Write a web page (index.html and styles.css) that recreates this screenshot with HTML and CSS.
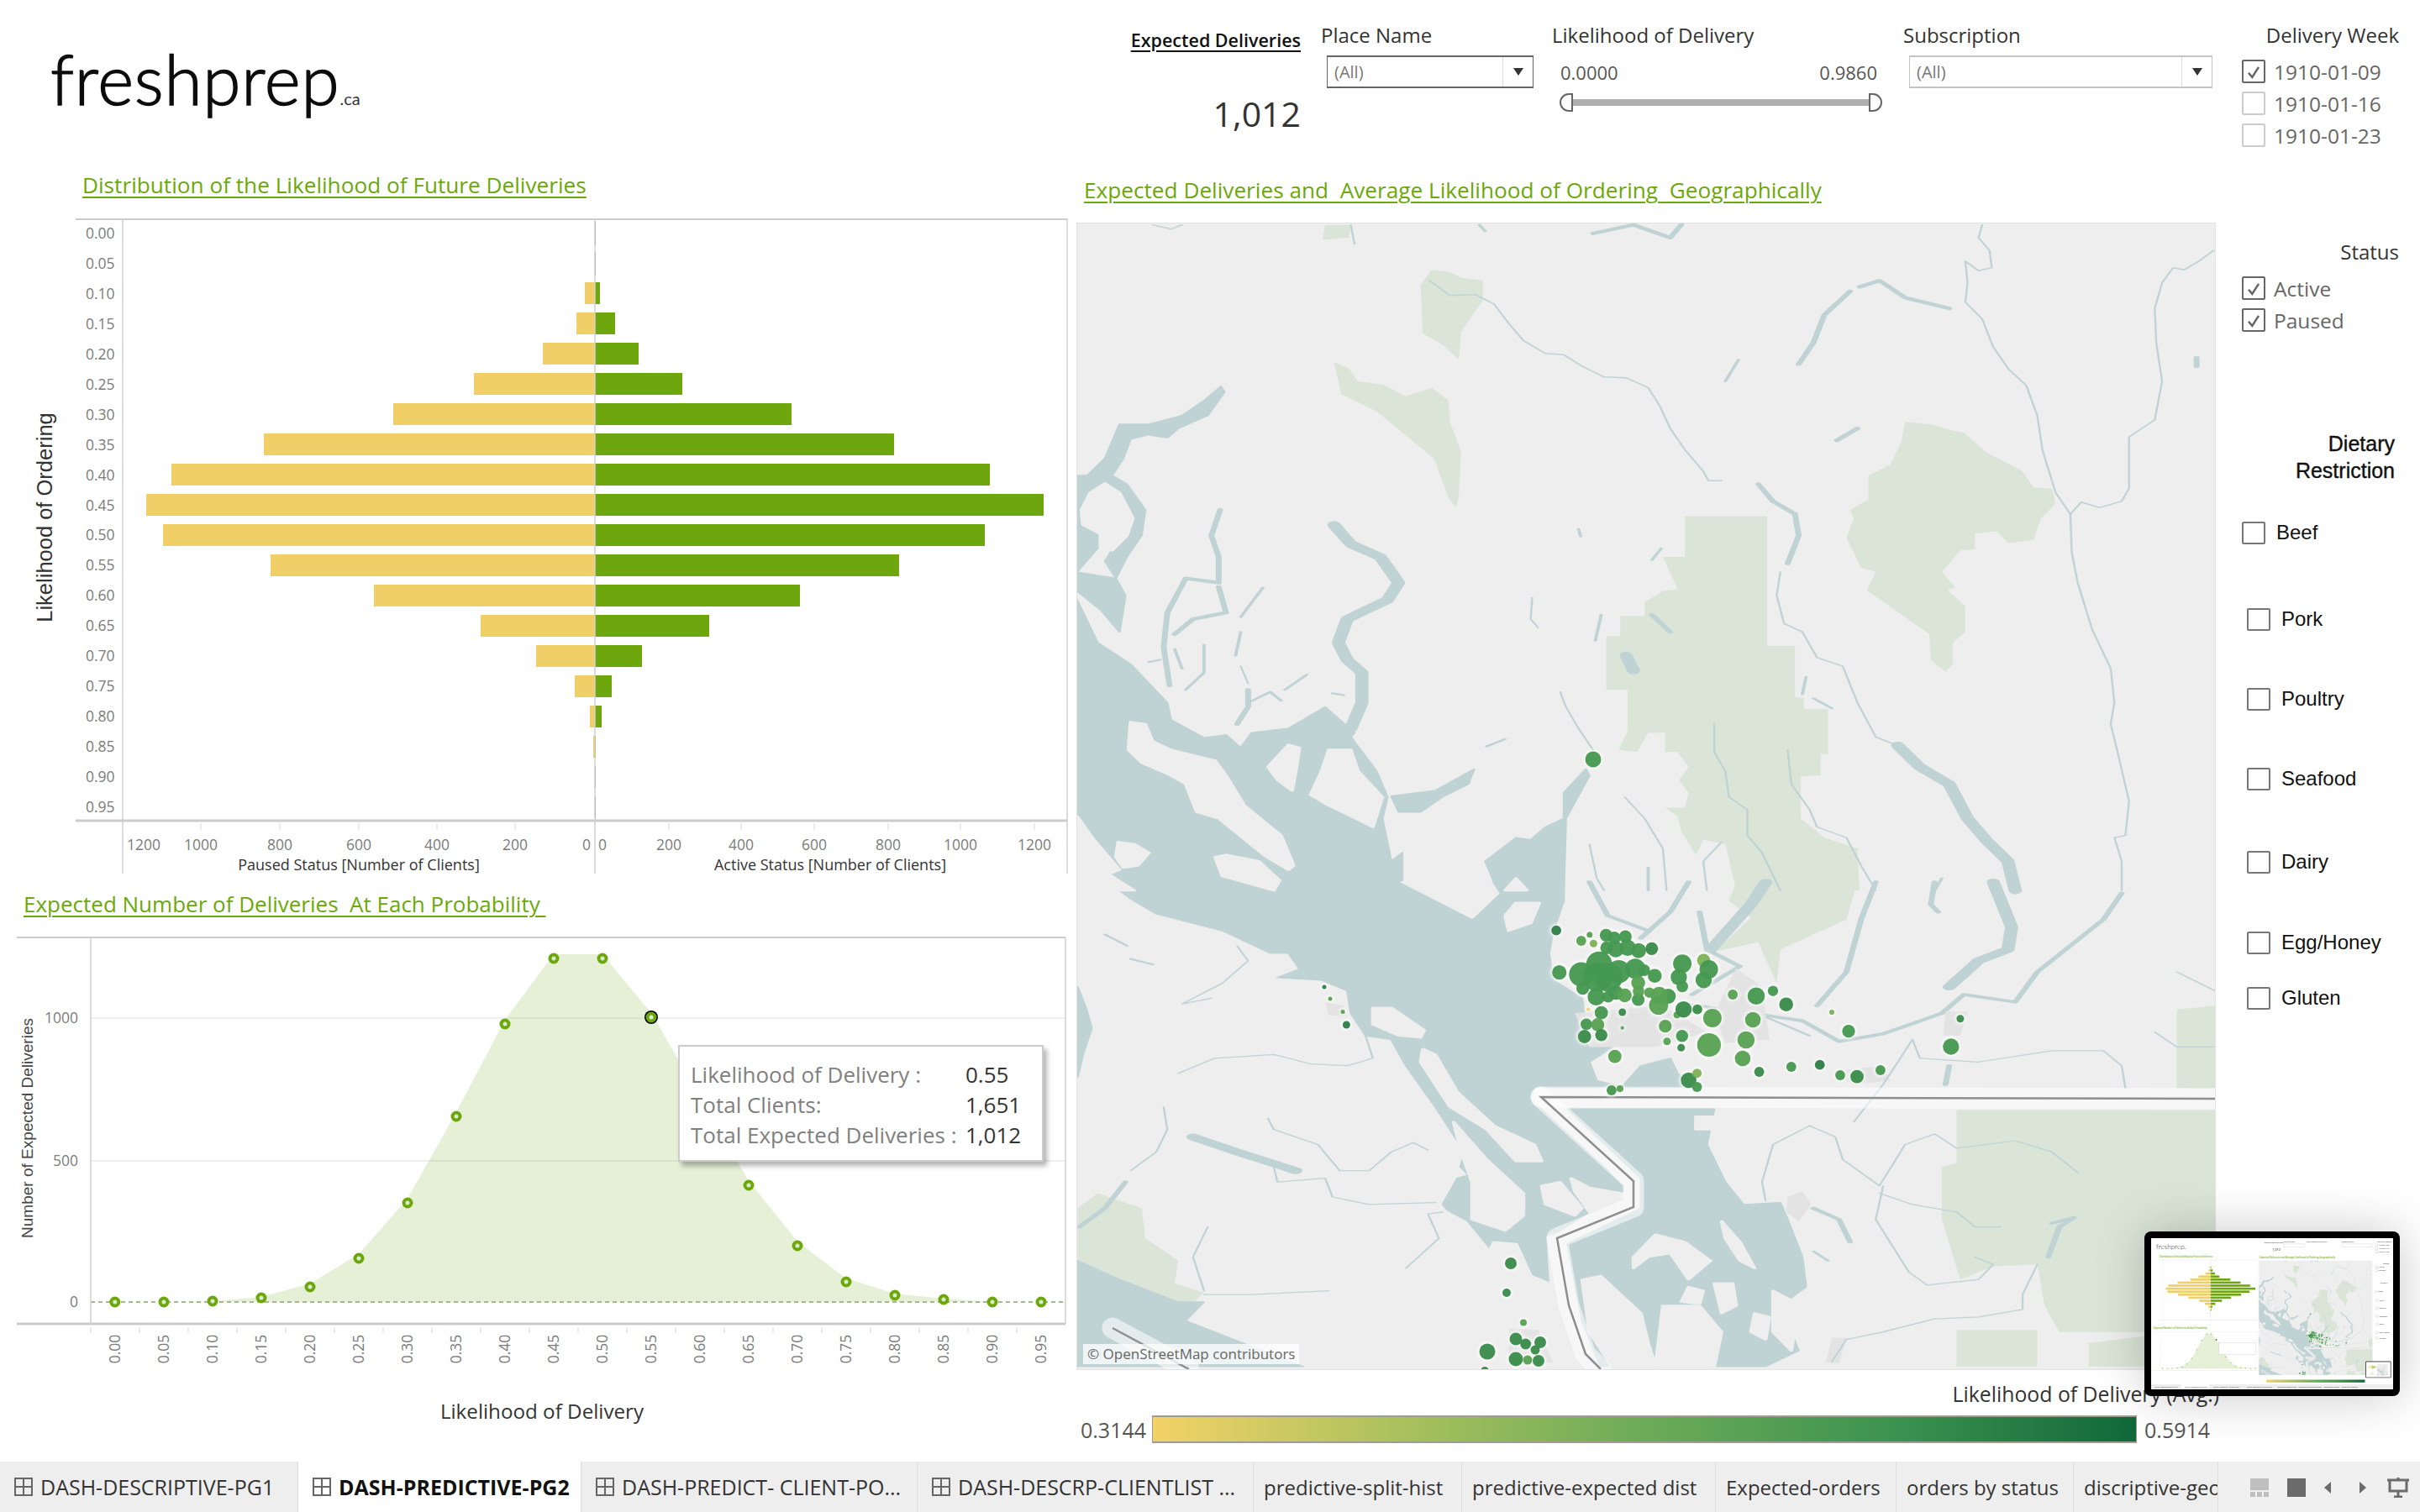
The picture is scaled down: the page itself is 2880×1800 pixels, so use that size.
FILE: index.html
```html
<!DOCTYPE html>
<html><head>
  <meta charset="utf-8">
  <title>freshprep - DASH-PREDICTIVE-PG2</title>
<link rel="stylesheet" href="styles.css">
</head>
<body>
<svg class="defs">
 <symbol id="icongrid" viewBox="0 0 22 22"><path d="M1 1h20v20h-20zM11 1v20M1 11h20"/></symbol>
 <symbol id="iconcheck" viewBox="0 0 28 28"><path d="M7 16l5 6 9-14"/></symbol>
 <linearGradient id="legendgrad"><stop offset="0" stop-color="#f3d267"/><stop offset=".25" stop-color="#aac15d"/><stop offset=".5" stop-color="#6cab58"/><stop offset=".75" stop-color="#3d9350"/><stop offset="1" stop-color="#10683a"/></linearGradient>
 <clipPath id="mapclip"><rect x="1282" y="266" width="1354" height="1364"/></clipPath>
</svg>

<div id="dash">

<div id="leftcol">
 <div class="logo">freshprep<span class="logoca">.ca</span></div>

 <div class="charttitle title1"><span>Distribution of the Likelihood of Future Deliveries</span></div>
 <svg class="chart1" viewBox="0 256 1282 800">
  <g id="bars">
   <g class="yellow">
    <rect x="696" y="336" width="12" height="26"/>
    <rect x="686" y="372" width="22" height="26"/>
    <rect x="646" y="408" width="62" height="26"/>
    <rect x="564" y="444" width="144" height="26"/>
    <rect x="468" y="480" width="240" height="26"/>
    <rect x="314" y="516" width="394" height="26"/>
    <rect x="204" y="552" width="504" height="26"/>
    <rect x="174" y="588" width="534" height="26"/>
    <rect x="194" y="624" width="514" height="26"/>
    <rect x="322" y="660" width="386" height="26"/>
    <rect x="445" y="696" width="263" height="26"/>
    <rect x="572" y="732" width="136" height="26"/>
    <rect x="638" y="768" width="70" height="26"/>
    <rect x="684" y="804" width="24" height="26"/>
    <rect x="702" y="840" width="6" height="26"/>
    <rect x="706" y="876" width="2" height="26"/>
   </g>
   <g class="green">
    <rect x="708" y="336" width="6" height="26"/>
    <rect x="708" y="372" width="24" height="26"/>
    <rect x="708" y="408" width="52" height="26"/>
    <rect x="708" y="444" width="104" height="26"/>
    <rect x="708" y="480" width="234" height="26"/>
    <rect x="708" y="516" width="356" height="26"/>
    <rect x="708" y="552" width="470" height="26"/>
    <rect x="708" y="588" width="534" height="26"/>
    <rect x="708" y="624" width="464" height="26"/>
    <rect x="708" y="660" width="362" height="26"/>
    <rect x="708" y="696" width="244" height="26"/>
    <rect x="708" y="732" width="136" height="26"/>
    <rect x="708" y="768" width="56" height="26"/>
    <rect x="708" y="804" width="20" height="26"/>
    <rect x="708" y="840" width="8" height="26"/>
    <rect x="708" y="876" width="1" height="26"/>
   </g>
   <path class="thinbar" d="M708.5 264v28M708.5 300v28M708.5 912v26M708.5 948v26"/>
   <path class="axisline" d="M146 260v780M708 262v778M1270 260v780"/>
   <path class="frametop" d="M90 261h1180"/>
   <path class="framebottom" d="M90 977h1180"/>
   <path class="tickmark" d="M239 980v8M333 980v8M427 980v8M520 980v8M613 980v8M796 980v8M882 980v8M969 980v8M1057 980v8M1143 980v8M1231 980v8"/>
  </g>
  <g class="ticklabel">
   <text x="102" y="284">0.00</text>
   <text x="102" y="320">0.05</text>
   <text x="102" y="356">0.10</text>
   <text x="102" y="392">0.15</text>
   <text x="102" y="428">0.20</text>
   <text x="102" y="464">0.25</text>
   <text x="102" y="500">0.30</text>
   <text x="102" y="536">0.35</text>
   <text x="102" y="572">0.40</text>
   <text x="102" y="608">0.45</text>
   <text x="102" y="643">0.50</text>
   <text x="102" y="679">0.55</text>
   <text x="102" y="715">0.60</text>
   <text x="102" y="751">0.65</text>
   <text x="102" y="787">0.70</text>
   <text x="102" y="823">0.75</text>
   <text x="102" y="859">0.80</text>
   <text x="102" y="895">0.85</text>
   <text x="102" y="931">0.90</text>
   <text x="102" y="967">0.95</text>
  </g>
  <g class="ticklabel mid">
   <text x="171" y="1012">1200</text>
   <text x="239" y="1012">1000</text>
   <text x="333" y="1012">800</text>
   <text x="427" y="1012">600</text>
   <text x="520" y="1012">400</text>
   <text x="613" y="1012">200</text>
   <text x="698" y="1012">0</text>
   <text x="717" y="1012">0</text>
   <text x="796" y="1012">200</text>
   <text x="882" y="1012">400</text>
   <text x="969" y="1012">600</text>
   <text x="1057" y="1012">800</text>
   <text x="1143" y="1012">1000</text>
   <text x="1231" y="1012">1200</text>
  </g>
  <g class="axistitle mid">
   <text x="427" y="1036">Paused Status [Number of Clients]</text>
   <text x="988" y="1036">Active Status [Number of Clients]</text>
  </g>
  <text class="vtitle" transform="translate(62 616) rotate(-90)">Likelihood of Ordering</text>
 </svg>

 <div class="charttitle title2"><span>Expected Number of Deliveries&nbsp; At Each Probability&nbsp;</span></div>
 <div class="chart2wrap">
 <svg class="chart2" viewBox="0 1110 1282 630">
  <g id="curve">
   <path class="gridline" d="M108 1212h1160M108 1382h1160"/>
   <polygon class="area" points="108,1550 136.8,1550 195,1550 253,1549 311,1544 369,1528 427,1493 485,1427 543,1324 601,1214 659,1136 717,1136 775,1206 833,1306 891,1406 949,1478 1007,1522 1065,1540 1123,1546 1181,1550 1268,1550"/>
   <path class="zeroline" d="M108 1550h1160"/>
   <path class="axisline" d="M108 1116v460"/>
   <path class="frametop" d="M20 1116h1248"/>
   <path class="framebottom" d="M20 1576h1248"/>
   <path class="axisline" d="M1268 1116v460"/>
   <path class="tickmark" d="M108 1580v7M166 1580v7M224 1580v7M282 1580v7M340 1580v7M398 1580v7M456 1580v7M514 1580v7M572 1580v7M630 1580v7M688 1580v7M746 1580v7M804 1580v7M862 1580v7M920 1580v7M978 1580v7M1036 1580v7M1094 1580v7M1152 1580v7M1210 1580v7"/>
   <circle class="picked" cx="775" cy="1211" r="8"/>
   <g class="dot">
    <circle cx="136.8" cy="1550" r="4.5"/>
    <circle cx="195" cy="1550" r="4.5"/>
    <circle cx="253" cy="1549" r="4.5"/>
    <circle cx="311" cy="1545" r="4.5"/>
    <circle cx="369" cy="1532" r="4.5"/>
    <circle cx="427" cy="1498" r="4.5"/>
    <circle cx="485" cy="1432" r="4.5"/>
    <circle cx="543" cy="1329" r="4.5"/>
    <circle cx="601" cy="1219" r="4.5"/>
    <circle cx="659" cy="1141" r="4.5"/>
    <circle cx="717" cy="1141" r="4.5"/>
    <circle cx="775" cy="1211" r="4.5"/>
    <circle cx="891" cy="1411" r="4.5"/>
    <circle cx="949" cy="1483" r="4.5"/>
    <circle cx="1007" cy="1526" r="4.5"/>
    <circle cx="1065" cy="1542" r="4.5"/>
    <circle cx="1123" cy="1547" r="4.5"/>
    <circle cx="1181" cy="1550" r="4.5"/>
    <circle cx="1239" cy="1550" r="4.5"/>
   </g>
  </g>
  <g class="ticklabel end">
   <text x="93" y="1218">1000</text>
   <text x="93" y="1388">500</text>
   <text x="93" y="1556">0</text>
  </g>
  <g class="ticklabel mid">
   <text transform="translate(143 1606) rotate(-90)">0.00</text>
   <text transform="translate(201 1606) rotate(-90)">0.05</text>
   <text transform="translate(259 1606) rotate(-90)">0.10</text>
   <text transform="translate(317 1606) rotate(-90)">0.15</text>
   <text transform="translate(375 1606) rotate(-90)">0.20</text>
   <text transform="translate(433 1606) rotate(-90)">0.25</text>
   <text transform="translate(491 1606) rotate(-90)">0.30</text>
   <text transform="translate(549 1606) rotate(-90)">0.35</text>
   <text transform="translate(607 1606) rotate(-90)">0.40</text>
   <text transform="translate(665 1606) rotate(-90)">0.45</text>
   <text transform="translate(723 1606) rotate(-90)">0.50</text>
   <text transform="translate(781 1606) rotate(-90)">0.55</text>
   <text transform="translate(839 1606) rotate(-90)">0.60</text>
   <text transform="translate(897 1606) rotate(-90)">0.65</text>
   <text transform="translate(955 1606) rotate(-90)">0.70</text>
   <text transform="translate(1013 1606) rotate(-90)">0.75</text>
   <text transform="translate(1071 1606) rotate(-90)">0.80</text>
   <text transform="translate(1129 1606) rotate(-90)">0.85</text>
   <text transform="translate(1187 1606) rotate(-90)">0.90</text>
   <text transform="translate(1245 1606) rotate(-90)">0.95</text>
  </g>
  <text class="vtitle small" transform="translate(39 1343) rotate(-90)">Number of Expected Deliveries</text>
  <text class="xtitle" x="645" y="1689">Likelihood of Delivery</text>
 </svg>
 <div class="tooltip">
  <span>Likelihood of Delivery :</span><b>0.55</b>
  <span>Total Clients:</span><b>1,651</b>
  <span>Total Expected Deliveries :</span><b>1,012</b>
 </div>
 </div><!-- chart2wrap -->
</div><!-- leftcol -->

<div id="rightcol">
 <div class="filters">
  <div class="kpi">
   <div class="kpititle">Expected Deliveries</div>
   <div class="kpivalue">1,012</div>
  </div>
  <div class="filter place">
   <div class="filtername">Place Name</div>
   <div class="dropdown active"><span>(All)</span><i></i></div>
  </div>
  <div class="filter likely">
   <div class="filtername">Likelihood of Delivery</div>
   <div class="rangevalues"><span>0.0000</span><span>0.9860</span></div>
   <div class="slider"><i class="handle left"></i><i class="track"></i><i class="handle right"></i></div>
  </div>
  <div class="filter subs">
   <div class="filtername">Subscription</div>
   <div class="dropdown"><span>(All)</span><i></i></div>
  </div>
  <div class="filter week">
   <div class="filtername right">Delivery Week</div>
   <div class="checklist">
    <label class="check on"><svg class="box"><use href="#iconcheck"/></svg>1910-01-09</label>
    <label class="check"><svg class="box"></svg>1910-01-16</label>
    <label class="check"><svg class="box"></svg>1910-01-23</label>
   </div>
  </div>
 </div><!-- filters -->

 <div class="mapandside">
  <div class="mapcol">
   <div class="charttitle title3"><span>Expected Deliveries and&nbsp; Average Likelihood of Ordering&nbsp; Geographically</span></div>
   <div class="mapwrap">
    <svg class="map" viewBox="1282 266 1354 1364">
     <g id="mapart" clip-path="url(#mapclip)">
      <rect class="land" x="1282" y="266" width="1354" height="1364"/>

      <!-- parks -->
      <g class="park" transform="translate(1280 260) scale(.8737 .5102)">
       <polygon points="340,15 375,15 372,45 336,50"/>
       <polygon points="485,120 510,125 525,138 555,145 555,190 545,215 525,265 522,330 500,295 473,268 470,155"/>
       <polygon points="352,335 372,350 385,380 420,388 450,415 485,395 508,425 510,475 520,520 525,545 522,650 518,675 508,650 488,560 410,450 362,410"/>
       <polygon points="830,695 942,695 942,997 980,997 980,1118 992,1118 992,1145 1025,1145 1025,1250 1015,1250 1015,1300 988,1302 988,1400 1020,1445 1065,1470 1068,1568 900,1568 885,1460 855,1450 845,1485 825,1430 820,1395 803,1375 830,1375 835,1340 822,1310 835,1280 820,1245 803,1245 803,1200 780,1200 765,1245 740,1240 752,1195 752,1100 723,1100 723,975 742,975 742,928 775,928 775,895 800,870 820,865 800,790 830,790"/>
       <polygon points="1130,475 1165,480 1195,495 1210,500 1240,545 1290,590 1305,628 1330,630 1335,665 1315,700 1305,750 1270,758 1255,730 1225,735 1225,772 1205,775 1180,825 1198,860 1188,868 1212,905 1212,965 1195,990 1195,1040 1185,1058 1165,1030 1163,970 1078,868 1090,825 1070,815 1050,745 1060,700 1055,680 1080,655 1080,600 1110,575 1125,520"/>
      </g>
      <g class="park" transform="translate(1280 1050) scale(.8737 .4464)">
       <polygon points="900,0 1065,0 1050,100 960,180 955,270 930,160 860,190 890,150 920,95 890,50"/>
       <polygon points="1200,608 1552,608 1552,1000 1460,1090 1460,1200 1340,1200 1320,1130 1310,1020 1250,1025 1205,1060 1180,900 1180,760 1200,750"/>
       <polygon points="1200,1195 1310,1195 1310,1292 1200,1292"/>
       <polygon points="1380,1230 1460,1210 1460,1292 1380,1292"/>
       <polygon points="1500,340 1552,330 1552,550 1500,550"/>
       <polygon points="3,870 30,830 60,850 90,870 95,950 140,1010 135,1070 175,1095 150,1140 95,1090 3,1010"/>
      </g>

      <!-- water -->
      <g class="water" transform="translate(1280 260) scale(.8737 .5102)">
       <polygon points="2,890 30,990 75,1040 125,1130 130,1170 175,1212 205,1205 225,1235 240,1200 290,1190 340,1140 380,1200 375,1210 410,1290 425,1350 418,1400 430,1500 445,1480 445,1568 2,1568"/>
       <polygon points="430,1348 490,1335 543,1285 535,1320 500,1350 470,1385 440,1385"/>
       <polygon points="695,1285 665,1340 665,1400 640,1420 620,1450 600,1445 558,1500 575,1568 665,1568 668,1400 700,1300"/>
       <polygon points="2,600 50,600 20,700 30,740 30,770 2,825"/>
       <polygon points="2,825 55,840 68,880 60,965 35,915 2,870"/>
       <polygon points="198,392 203,405 180,460 140,490 125,512 100,505 75,515 65,560 50,600 70,620 95,680 90,740 70,790 55,840 40,800 75,705 60,640 40,618 25,625 10,610 40,560 60,480 100,480 145,460 175,425"/>
       <polyline class="w18" points="352,715 375,760 415,790 440,850 425,890 370,935 358,990 370,1030 390,1060 390,1130 375,1190"/>
       <polyline class="w8" points="197,680 185,740 195,790 195,850 150,840 125,920 120,1000 128,1090"/>
       <polyline class="w8" points="195,860 205,920 160,935 135,970"/>
       <polyline class="w5" points="255,862 225,930"/>
       <polyline class="w5" points="225,965 218,1020"/>
       <polyline class="w5" points="175,995 175,1060 150,1100"/>
       <polyline class="w5" points="135,1005 145,1050"/>
       <polyline class="w3" points="225,1045 235,1085"/>
       <polyline class="w8" points="235,1100 235,1140 220,1180"/>
       <polyline class="w5" points="235,1130 265,1105 280,1125"/>
       <polyline class="w5" points="315,1065 285,1100"/>
       <polyline class="w5" points="585,1215 560,1232"/>
       <polyline class="w5" points="100,1035 115,1030"/>
       <polyline class="w5" points="350,1108 365,1112"/>
      </g>
      <g class="water" transform="translate(1280 1050) scale(.8737 .4464)">
       <polygon points="45,0 665,0 665,50 650,135 645,190 650,260 690,310 695,380 740,430 700,480 710,530 745,545 770,490 810,470 820,510 845,548 625,548 620,580 720,760 745,810 745,850 700,880 660,930 640,945 645,1100 690,1292 640,1292 600,1100 560,990 500,860 520,790 530,720 490,600 450,490 430,420 395,410 375,350 370,290 335,262 275,255 305,232 290,190 265,190 200,130 110,85 75,45"/>
       <polygon points="670,605 870,605 860,700 885,800 910,860 960,855 970,900 990,1000 995,1080 960,1130 985,1250 940,1292 715,1292 690,1170 670,965 770,870 770,790"/>
       <polygon points="3,1010 60,1060 140,1120 175,1120 150,1170 310,1292 3,1292"/>
       <polygon points="3,280 15,340 22,390 10,460 3,520"/>
       <polyline class="w18" points="940,0 920,60 865,180"/>
       <polyline class="w18" points="1250,0 1275,120 1270,180 1230,210 1190,280"/>
       <polyline class="w8" points="700,0 725,90 780,130"/>
       <polyline class="w8" points="835,0 810,80 770,150"/>
       <polyline class="w8" points="850,80 860,180 905,225 840,300"/>
       <polyline class="w8" points="1170,0 1165,60 1175,80"/>
       <polyline class="w8" points="1090,0 1070,100 1050,240 1010,330"/>
       <polyline class="w8" points="830,325 920,350 990,370 1040,425 1100,405 1180,350 1210,300 1280,320 1310,240 1400,100 1425,30"/>
       <polyline class="w5" points="940,360 1000,410"/>
       <polyline class="w18" points="160,680 220,720 300,770"/>
       <polyline class="w8" points="68,800 40,870 5,920"/>
       <polyline class="w8" points="1005,870 1040,900 1055,960"/>
       <polyline class="w8" points="1330,910 1360,895 1340,920 1325,1000"/>
       <polyline class="w5" points="1005,985 1025,1010"/>
       <polyline class="w8" points="1190,490 1185,540"/>
       <polyline class="w5" points="75,205 105,220"/>
       <polyline class="w5" points="40,140 70,170"/>
      </g>

      <!-- islands and shores over the water -->
      <g class="land" transform="translate(1280 260) scale(.8737 .5102)">
       <polygon points="40,618 60,640 78,700 70,740 50,775 38,740 10,715 8,680 20,640"/>
       <polygon points="75,1175 95,1180 105,1220 130,1240 190,1265 205,1300 230,1370 280,1440 297,1510 290,1520 260,1490 195,1400 165,1385 150,1320 130,1300 90,1270 72,1240"/>
       <polygon points="290,1228 305,1235 300,1290 295,1335 275,1310 262,1280"/>
       <polygon points="345,1240 375,1240 385,1290 418,1350 405,1420 370,1390 345,1370 320,1345 335,1290"/>
       <polygon points="2,1395 25,1450 60,1520 45,1530 80,1568 2,1568"/>
       <polygon points="58,1455 80,1460 100,1480 85,1510 65,1515 55,1490"/>
       <polygon points="190,1490 205,1485 250,1500 278,1545 270,1568 200,1535"/>
       <polygon points="585,1568 600,1540 615,1568"/>
      </g>
      <g class="land" transform="translate(1280 1050) scale(.8737 .4464)">
       <polygon points="445,0 565,0 575,30 540,95"/>
       <polygon points="600,55 632,55 620,110 590,130 585,90"/>
       <polygon points="405,335 430,335 475,395 470,415 440,410 405,380"/>
       <polygon points="473,445 490,460 520,560 570,650 625,700 635,745 600,745 560,660 510,600 470,480"/>
       <polygon points="418,570 445,590 490,700 530,780 510,790 470,710 420,590"/>
       <polygon points="515,640 560,740 610,830 610,890 585,930 540,900 540,800 525,720"/>
       <polygon points="635,810 660,800 690,870 680,890 640,860"/>
       <polygon points="675,790 700,815 745,830 745,850 700,880 680,825"/>
       <polygon points="495,870 530,905 570,1000 600,1050 650,1150 640,1180 590,1080 550,1000 510,930"/>
       <polygon points="570,960 600,965 620,1050 645,1070 690,1200 700,1292 610,1292 590,1180 580,1100 560,1000"/>
       <polygon points="760,1000 790,940 830,960 865,1010 835,1060 810,990 780,1000 760,1030"/>
       <polygon points="690,1060 715,1050 770,1150 780,1230 790,1292 730,1292 700,1200"/>
       <polygon points="800,1130 850,1130 880,1200 870,1292 790,1292"/>
       <polygon points="870,1070 895,1070 900,1130 880,1150"/>
       <polygon points="950,1090 985,1125 975,1250 950,1200"/>
       <polygon points="880,905 905,960 925,1030 905,1010 885,950"/>
       <polygon points="890,735 900,745 895,760 888,750"/>
       <polygon points="845,625 875,625 870,660 845,660"/>
       <polygon points="835,1080 855,1090 850,1125 825,1120"/>
       <polygon points="925,1150 945,1160 940,1220 920,1200"/>
      </g>

      <!-- grey built up patches -->
      <g class="urban" transform="translate(1280 1050) scale(.8737 .4464)">
       <polygon points="340,320 365,330 370,360 345,355"/>
       <polygon points="680,350 800,330 860,400 790,440 700,440"/>
       <polygon points="900,230 935,280 945,420 885,430 870,350"/>
       <polygon points="1030,505 1100,490 1110,530 1060,540"/>
       <polygon points="1185,345 1215,345 1205,410 1182,410"/>
       <polygon points="970,840 990,825 1002,860 985,905 968,880"/>
       <polygon points="1030,1215 1050,1215 1040,1285 1022,1280"/>
       <polygon points="590,1190 630,1195 650,1280 590,1292"/>
      </g>

      <!-- rivers -->
      <g class="water" transform="translate(1280 260) scale(.8737 .5102)">
       <polyline class="w3" points="105,15 130,25 145,15"/>
       <polyline class="w3" points="375,15 380,60"/>
       <polyline class="w5" points="550,15 558,30"/>
       <polyline class="w8" points="705,35 760,15 810,45 825,15"/>
       <polyline class="w3" points="482,145 510,180 545,178 570,200 590,245 610,285 640,315 665,318 690,345 720,370 750,372 780,395 795,435 810,490 830,540 855,590 862,612 880,612"/>
       <polyline class="w3" points="1235,15 1230,45 1245,75 1248,115 1230,122 1212,100 1215,150 1212,195 1235,235 1250,300 1270,350 1295,390 1310,460 1317,540 1335,640 1355,690 1357,780 1365,850 1385,960 1410,1050 1415,1130 1410,1180 1420,1250 1435,1360 1430,1440 1415,1445 1425,1500 1425,1568"/>
       <polyline class="w3" points="1550,75 1530,100 1510,120 1495,115 1480,150 1470,210 1472,290 1480,380 1470,470 1435,510 1435,630 1425,660 1395,675 1370,662 1355,690"/>
       <polyline class="w8" points="930,620 950,660 980,690 985,740 970,805"/>
       <polyline class="w3" points="960,825 955,880 965,945 990,965 1010,1025 1045,1045 1065,1130 1090,1210 1120,1230"/>
       <polyline class="w18" points="1120,1230 1150,1280 1190,1320 1215,1400 1240,1450 1270,1500 1280,1568"/>
       <polyline class="w8" points="1068,160 1095,145 1130,185 1190,210"/>
       <polyline class="w8" points="1055,170 1020,225 1005,290 985,340"/>
       <polyline class="w5" points="903,330 885,380"/>
       <polyline class="w8" points="1065,490 1037,518"/>
       <polyline class="w8" points="1527,325 1527,345"/>
       <polyline class="w5" points="685,725 688,742"/>
       <polyline class="w5" points="798,770 785,797"/>
       <polyline class="w3" points="622,885 620,935 630,955"/>
       <polyline class="w5" points="716,925 708,985"/>
       <polyline class="w3" points="660,1105 668,1140 685,1190 705,1240"/>
       <polyline class="w5" points="1005,1120 1030,1143"/>
       <polyline class="w5" points="995,1070 990,1110"/>
       <polyline class="w8" points="785,925 810,965"/>
       <polyline class="w18" points="750,1020 760,1055"/>
       <polyline class="w3" points="870,1180 870,1245 885,1290 890,1350 915,1380 915,1440 935,1480 960,1568"/>
       <polyline class="w3" points="970,1240 975,1320 1000,1380 1010,1420 1050,1445 1070,1510 1090,1568"/>
       <polyline class="w3" points="748,1350 775,1400 800,1470 805,1568"/>
       <polyline class="w3" points="700,1460 710,1540 720,1568"/>
       <polyline class="w3" points="880,1455 855,1500 860,1568"/>
       <polyline class="w5" points="780,1515 780,1568"/>
       <polyline class="w5" points="1180,1540 1170,1568"/>
      </g>
      <g class="water" transform="translate(1280 1050) scale(.8737 .4464)">
       <polyline class="w3" points="220,170 235,210 200,270 145,325 185,310"/>
       <polyline class="w3" points="395,410 405,470 370,490 320,485 270,460 190,470 140,510"/>
       <polyline class="w3" points="120,600 125,660 110,720 75,770"/>
       <polyline class="w3" points="262,630 270,660 330,700 360,770 400,770 430,720 460,695 480,715"/>
       <polyline class="w3" points="270,760 275,800 340,790 350,840 400,860 490,855"/>
       <polyline class="w3" points="180,920 160,1000 175,1090"/>
       <polyline class="w3" points="500,880 480,885 495,950 450,1030"/>
       <polyline class="w3" points="175,1100 240,1100 345,1090"/>
       <polyline class="w3" points="1000,650 950,700 935,800 940,850"/>
       <polyline class="w3" points="1000,650 1035,680 1045,740 1095,810 1130,700 1170,672 1200,710 1280,690 1330,720 1365,775"/>
       <polyline class="w3" points="1100,810 1090,900 1135,1040 1160,1075 1230,1060 1250,1020 1225,1000"/>
       <polyline class="w3" points="1095,830 1140,860 1200,880 1225,920 1260,920"/>
       <polyline class="w3" points="1310,1020 1290,1100 1290,1140 1230,1160 1170,1165 1100,1200 1050,1220 1030,1280"/>
       <polyline class="w3" points="1140,420 1150,470 1230,480 1330,450 1400,450 1425,490 1430,550"/>
       <polyline class="w3" points="1500,240 1552,290"/>
       <polyline class="w3" points="1470,400 1500,440 1552,440"/>
       <polyline class="w3" points="1140,420 1100,540 1060,640"/>
      </g>

      <!-- border line with its pale casing -->
      <polyline class="casing" points="1834,1306 2636,1308"/>
      <polyline class="casing" points="1834,1306 1944,1406 1944,1437 1853,1474 1867,1554 1887,1612 1905,1630"/>
      <polyline class="casing" points="1324,1581 1415,1630"/>
      <polyline class="border" points="2636,1308 1834,1306 1944,1406 1944,1437 1853,1474 1867,1554 1887,1612 1905,1630"/>
      <polyline class="border" points="1324,1581 1415,1630"/>

      <!-- delivery marks -->
      <g class="marks">
       <circle cx="1896" cy="904" r="9.5"/>
       <circle class="dk" cx="1576" cy="1175" r="2.5"/>
       <circle class="lt" cx="1583" cy="1189" r="2.5"/>
       <circle class="lt" cx="1598" cy="1204.5" r="2.5"/>
       <circle class="dk" cx="1602.4" cy="1220" r="4.5"/>
       <circle class="mk" cx="1798" cy="1504" r="7"/>
       <circle class="mk" cx="1793" cy="1539" r="5"/>
       <circle class="lt" cx="1813" cy="1574.5" r="4"/>
       <circle class="mk" cx="1804" cy="1594" r="7.5"/>
       <circle class="mk" cx="1815.6" cy="1600" r="6.5"/>
       <circle class="mk" cx="1833" cy="1598" r="7"/>
       <circle class="mk" cx="1827" cy="1607" r="5.5"/>
       <circle class="mk" cx="1770" cy="1609" r="9.5"/>
       <circle class="mk" cx="1804" cy="1618" r="8.5"/>
       <circle class="lt" cx="1818" cy="1619" r="5.5"/>
       <circle class="mk" cx="1831" cy="1620" r="7"/>
       <circle class="mk" cx="1767" cy="1632" r="5"/>
       <circle class="dk" cx="1852.1" cy="1107.7" r="5.9"/>
       <circle class="lt" cx="1881.8" cy="1120" r="5.9"/>
       <circle class="lt" cx="1891.8" cy="1112.7" r="3.5"/>
       <circle class="ltr" cx="1896.4" cy="1123.3" r="4.5"/>
       <circle cx="1855.7" cy="1157.7" r="8.6"/>
       <circle cx="1911.4" cy="1113.3" r="7.6"/>
       <circle cx="1921.1" cy="1116.7" r="7.6"/>
       <circle cx="1934.3" cy="1115" r="7.6"/>
       <circle cx="1912.1" cy="1128.3" r="7.6"/>
       <circle cx="1922.9" cy="1130" r="9.7"/>
       <circle cx="1937.1" cy="1128.3" r="9.7"/>
       <circle cx="1950" cy="1131.7" r="9"/>
       <circle class="mk" cx="1965.7" cy="1129.3" r="7.6"/>
       <circle cx="1903.2" cy="1148.3" r="15.5"/>
       <circle cx="1881.8" cy="1160" r="14.5"/>
       <circle cx="1901.4" cy="1163.3" r="17.2"/>
       <circle cx="1913.9" cy="1163.3" r="17.2"/>
       <circle cx="1926.4" cy="1156.7" r="13.8"/>
       <circle cx="1946.1" cy="1153.3" r="12"/>
       <circle cx="1956.8" cy="1155" r="6.9"/>
       <circle cx="1969.3" cy="1161.7" r="8.3"/>
       <circle cx="1883.6" cy="1176.7" r="7.6"/>
       <circle cx="1899.6" cy="1186.7" r="10.3"/>
       <circle cx="1913.9" cy="1186.7" r="6.9"/>
       <circle cx="1922.9" cy="1181.7" r="8.6"/>
       <circle class="lt" cx="1933.6" cy="1185" r="8.3"/>
       <circle class="lt" cx="1949.6" cy="1170" r="8.3"/>
       <circle cx="1949.6" cy="1190" r="7.6"/>
       <circle class="lt" cx="1950" cy="1180" r="6.9"/>
       <circle class="lt" cx="1962.9" cy="1181.7" r="6.2"/>
       <circle cx="1985.4" cy="1186" r="9"/>
       <circle class="lt" cx="1973.9" cy="1196.7" r="11.4"/>
       <circle class="lt" cx="1974.6" cy="1185" r="10.3"/>
       <circle cx="2002.1" cy="1147.3" r="11"/>
       <circle cx="1997.9" cy="1163.3" r="9.7"/>
       <circle cx="2002.1" cy="1174.3" r="6.9"/>
       <circle class="ltr" cx="2027.5" cy="1143.3" r="7.9"/>
       <circle cx="2033.6" cy="1154" r="11"/>
       <circle cx="2027.5" cy="1166.7" r="9.7"/>
       <circle class="lt" cx="2062.1" cy="1184" r="5.9"/>
       <circle cx="2090" cy="1185.7" r="10.3"/>
       <circle cx="2110" cy="1179.7" r="6.2"/>
       <circle class="mk" cx="2125.7" cy="1195.7" r="8.3"/>
       <circle class="ltr" cx="2180" cy="1205" r="3.1"/>
       <circle cx="2200" cy="1227.7" r="7.6"/>
       <circle class="mk" cx="2332.9" cy="1212.7" r="4.5"/>
       <circle cx="2321.8" cy="1246" r="9.7"/>
       <circle cx="2237.9" cy="1274" r="5.9"/>
       <circle class="mk" cx="2210" cy="1281.7" r="7.9"/>
       <circle cx="2190" cy="1280" r="5.9"/>
       <circle class="dk" cx="2165.7" cy="1267.7" r="5.9"/>
       <circle cx="2131.8" cy="1270" r="5.9"/>
       <circle class="mk" cx="2093.6" cy="1276" r="5.9"/>
       <circle class="lt" cx="2073.9" cy="1260" r="9.3"/>
       <circle class="lt" cx="2077.9" cy="1238" r="10.3"/>
       <circle class="lt" cx="2086.1" cy="1214" r="9.3"/>
       <circle class="lt" cx="2037.9" cy="1212" r="11"/>
       <circle class="lt" cx="2033.9" cy="1244" r="14.1"/>
       <circle class="mk" cx="2020" cy="1201.7" r="5.9"/>
       <circle class="lt" cx="1995.7" cy="1208.3" r="4.1"/>
       <circle class="mk" cx="2003.6" cy="1201.7" r="9.7"/>
       <circle cx="2001.8" cy="1233.3" r="7.2"/>
       <circle class="mk" cx="2000.7" cy="1247.3" r="4.5"/>
       <circle class="lt" cx="1983.9" cy="1239.7" r="4.5"/>
       <circle class="lt" cx="1981.8" cy="1221.7" r="7.6"/>
       <circle class="mk" cx="1930.7" cy="1205" r="4.5"/>
       <circle class="yl" cx="1890" cy="1201.7" r="2.1"/>
       <circle cx="1905.7" cy="1205.7" r="7.9"/>
       <circle cx="1887.9" cy="1219.3" r="6.9"/>
       <circle class="lt" cx="1901.4" cy="1220" r="7.9"/>
       <circle class="mk" cx="1885.7" cy="1234" r="7.9"/>
       <circle class="mk" cx="1905.7" cy="1232.3" r="7.2"/>
       <circle class="lt" cx="1930.7" cy="1223.7" r="2.1"/>
       <circle class="lt" cx="1921.8" cy="1257.7" r="7.9"/>
       <circle cx="1917.9" cy="1298" r="5.9"/>
       <circle class="lt" cx="1927.9" cy="1296" r="4.1"/>
       <circle class="mk" cx="2009.6" cy="1286" r="9.3"/>
       <circle class="ltr" cx="2019.6" cy="1277.7" r="5.5"/>
       <circle cx="2019.6" cy="1294" r="5.9"/>
      </g>
     </g>
    </svg>
    <div class="osm">© OpenStreetMap contributors</div>
   </div><!-- mapwrap -->
   <div class="legendtitle">Likelihood of Delivery (Avg.)</div>
   <div class="legend">
    <span>0.3144</span>
    <div class="legendbar"></div>
    <span>0.5914</span>
   </div>
  </div><!-- mapcol -->

  <div class="side">
   <div class="sidetitle">Status</div>
   <div class="checklist">
    <label class="check on"><svg class="box"><use href="#iconcheck"/></svg>Active</label>
    <label class="check on"><svg class="box"><use href="#iconcheck"/></svg>Paused</label>
   </div>
   <div class="diettitle">Dietary<br>Restriction</div>
   <div class="dietlist">
    <label class="diet beef"><i></i>Beef</label>
    <label class="diet pork"><i></i>Pork</label>
    <label class="diet poultry"><i></i>Poultry</label>
    <label class="diet seafood"><i></i>Seafood</label>
    <label class="diet dairy"><i></i>Dairy</label>
    <label class="diet egg"><i></i>Egg/Honey</label>
    <label class="diet gluten"><i></i>Gluten</label>
   </div>
  </div><!-- side -->
 </div><!-- mapandside -->
</div><!-- rightcol -->

</div><!-- dash -->

<div id="tabs">
 <div class="tab t1"><svg class="tabicon"><use href="#icongrid"/></svg>DASH-DESCRIPTIVE-PG1</div>
 <div class="tab t2 current"><svg class="tabicon"><use href="#icongrid"/></svg>DASH-PREDICTIVE-PG2</div>
 <div class="tab t3"><svg class="tabicon"><use href="#icongrid"/></svg>DASH-PREDICT- CLIENT-PO...</div>
 <div class="tab t4"><svg class="tabicon"><use href="#icongrid"/></svg>DASH-DESCRP-CLIENTLIST ...</div>
 <div class="tab t5">predictive-split-hist</div>
 <div class="tab t6">predictive-expected dist</div>
 <div class="tab t7">Expected-orders</div>
 <div class="tab t8">orders by status</div>
 <div class="tab t9">discriptive-geo</div>
 <div class="tabtools">
  <svg class="tool" width="22" height="22"><path class="toolgrey" d="M0 0h22v14h-22zM0 16h6v6h-6zM8 16h6v6h-6zM16 16h6v6h-6z"/></svg>
  <svg class="tool" width="22" height="22"><path class="tooldark" d="M0 0h22v22h-22z"/></svg>
  <svg class="tool arrow" width="8" height="14"><path class="tooldark" d="M8 0v14l-8-7z"/></svg>
  <svg class="tool arrow" width="8" height="14"><path class="tooldark" d="M0 0v14l8-7z"/></svg>
  <svg class="tool show" width="26" height="24"><path class="toolline" d="M0 3h26M3 3v13h20v-13M13 16v7M8 23h10M13 0v3"/></svg>
 </div>
</div><!-- tabs -->

<!-- sheet preview, the same page at a tenth of its size -->
<div class="preview">
 <svg class="previewpage" viewBox="0 0 2880 1800">
  <rect class="pagewhite" width="2880" height="1800"/>
  <text class="minilogo" x="60" y="125">freshprep.</text>
  <text class="minititle" x="98" y="228">Distribution of the Likelihood of Future Deliveries</text>
  <text class="minititle" x="1290" y="236">Expected Deliveries and  Average Likelihood of Ordering  Geographically</text>
  <text class="minititle" x="28" y="1084">Expected Number of Deliveries  At Each Probability</text>
  <text class="minitext" x="1344" y="56">Expected Deliveries</text>
  <text class="minitext big" x="1442" y="148">1,012</text>
  <text class="minitext" x="1572" y="50">Place Name</text>
  <text class="minitext" x="1847" y="50">Likelihood of Delivery</text>
  <text class="minitext" x="2265" y="50">Subscription</text>
  <text class="minitext" x="2695" y="50">Delivery Week</text>
  <text class="minitext" x="2706" y="93">1910-01-09</text>
  <text class="minitext" x="2706" y="131">1910-01-16</text>
  <text class="minitext" x="2706" y="169">1910-01-23</text>
  <text class="minitext" x="2760" y="308">Status</text>
  <text class="minitext" x="2706" y="352">Active</text>
  <text class="minitext" x="2706" y="390">Paused</text>
  <text class="minitext" x="2730" y="535">Dietary</text>
  <text class="minitext" x="2709" y="642">Beef</text>
  <text class="minitext" x="2715" y="745">Pork</text>
  <text class="minitext" x="2715" y="840">Poultry</text>
  <text class="minitext" x="2715" y="936">Seafood</text>
  <text class="minitext" x="2715" y="1034">Dairy</text>
  <text class="minitext" x="2715" y="1130">Egg/Honey</text>
  <text class="minitext" x="2715" y="1196">Gluten</text>
  <path class="minibox" d="M1579 67h246v38h-246zM2271 67h361v38h-361zM2668 71h28v28h-28zM2668 109h28v28h-28zM2668 147h28v28h-28zM2668 329h28v28h-28zM2668 367h28v28h-28zM2668 621h27v27h-27zM2674 724h27v27h-27zM2674 819h27v27h-27zM2674 914h27v27h-27zM2674 1013h27v27h-27zM2674 1109h27v27h-27zM2674 1175h27v27h-27z"/>
  <use href="#bars"/>
  <use href="#curve"/>
  <use href="#mapart"/>
  <rect class="minitip" x="807" y="1244" width="435" height="139"/>
  <rect class="minibar" x="1372" y="1685" width="1172" height="33"/>
  <rect class="minitabs" y="1740" width="2880" height="60"/>
  <rect class="pagewhite" x="355" y="1740" width="337" height="60"/>
  <text class="minitext" x="48" y="1778">DASH-DESCRIPTIVE-PG1</text>
  <text class="minitext" x="403" y="1778">DASH-PREDICTIVE-PG2</text>
  <text class="minitext" x="742" y="1778">DASH-PREDICT- CLIENT-PO...</text>
  <text class="minitext" x="1142" y="1778">DASH-DESCRP-CLIENTLIST ...</text>
  <text class="minitext" x="1505" y="1778">predictive-split-hist</text>
  <text class="minitext" x="1752" y="1778">predictive-expected dist</text>
  <text class="minitext" x="2054" y="1778">Expected-orders</text>
  <text class="minitext" x="2269" y="1778">orders by status</text>
  <rect class="minithumb" x="2552" y="1466" width="304" height="196" rx="8"/>
  <g transform="translate(2560 1474) scale(.1)">
   <rect class="pagewhite" width="2880" height="1800"/>
   <use href="#bars"/>
   <use href="#curve"/>
   <use href="#mapart"/>
   <rect class="minitabs" y="1740" width="2880" height="60"/>
  </g>
 </svg>
</div>
</body></html>
```

FILE: styles.css
```css
html, body{
  margin: 0;
  padding: 0;
  background-color: #fff;
}
body{
  position: relative;
  width: 2880px;
  height: 1800px;
  overflow: hidden;
  font-family: "Open Sans", sans-serif;
  color: #333;
}
svg.defs{
  width: 0;
  height: 0;
  display: block;
}
#dash{
  display: flex;
  height: 1740px;
}
#leftcol{
  width: 1282px;
  flex: none;
}
#rightcol{
  width: 1598px;
  flex: none;
}

/* logo */
.logo{
  height: 200px;
  box-sizing: border-box;
  padding: 38px 0 0 60px;
  font-family: Lato, sans-serif;
  font-weight: 300;
  font-size: 82px;
  line-height: 110px;
  letter-spacing: .8px;
  color: #0c0c0c;
  -webkit-text-stroke: 1.4px #0c0c0c;
}
.logoca{
  font-size: 20px;
  letter-spacing: 0;
  -webkit-text-stroke: 0;
  font-weight: 400;
  color: #333;
}

/* sheet titles */
.charttitle{
  font-size: 26.2px;
  line-height: 40px;
  color: #6ca80c;
}
.charttitle span{
  text-decoration: underline;
  text-decoration-thickness: 2px;
  text-underline-offset: 4px;
}
.title1{
  height: 56px;
  padding-left: 98px;
}
.title2{
  height: 54px;
  padding-left: 28px;
  font-size: 26px;
}
.title3{
  height: 60px;
  padding: 6px 0 0 8px;
  white-space: nowrap;
}

/* charts */
.chart1{
  display: block;
  width: 1282px;
  height: 800px;
}
.chart2wrap{
  position: relative;
  height: 630px;
}
.chart2{
  display: block;
  width: 1282px;
  height: 630px;
}
.yellow{
  fill: #f0ce68;
}
.green{
  fill: #6da60d;
}
.thinbar{
  stroke: #777;
  stroke-width: 1;
  fill: none;
}
.axisline{
  stroke: #cfcfcf;
  stroke-width: 1.5;
  fill: none;
}
.frametop{
  stroke: #ccc;
  stroke-width: 2;
  fill: none;
}
.framebottom{
  stroke: #ccc;
  stroke-width: 3;
  fill: none;
}
.tickmark{
  stroke: #e6e6e6;
  stroke-width: 1.5;
  fill: none;
}
.ticklabel{
  font-size: 17.5px;
  fill: #7b7b7b;
}
.ticklabel.mid, .axistitle.mid{
  text-anchor: middle;
}
.ticklabel.end{
  text-anchor: end;
}
.axistitle{
  font-size: 18px;
  fill: #333;
}
.vtitle{
  font-family: "Liberation Sans", sans-serif;
  font-size: 25.5px;
  text-anchor: middle;
  fill: #333;
}
.vtitle.small{
  font-size: 19px;
  fill: #444;
}
.xtitle{
  font-size: 24.2px;
  text-anchor: middle;
  fill: #333;
}
.gridline{
  stroke: #efefef;
  stroke-width: 2;
  fill: none;
}
.area{
  fill: #7fb239;
  fill-opacity: .2;
}
.zeroline{
  stroke: #a5b890;
  stroke-width: 2;
  stroke-dasharray: 5 4;
  fill: none;
}
.dot circle{
  fill: #dcead0;
  stroke: #6ca80c;
  stroke-width: 4;
}
.picked{
  fill: #000;
}
.tooltip{
  position: absolute;
  left: 807px;
  top: 134px;
  width: 435px;
  height: 139px;
  box-sizing: border-box;
  padding: 15px 0 0 13px;
  display: grid;
  grid-template-columns: 327px auto;
  grid-auto-rows: 36px;
  align-items: center;
  font-size: 26px;
  background-color: #fff;
  border: 2px solid #ccc;
  box-shadow: 4px 5px 6px rgba(0,0,0,.3);
  color: #808080;
  white-space: nowrap;
}
.tooltip b{
  font-weight: 500;
  color: #333;
}

/* filters along the top */
.filters{
  display: flex;
  height: 200px;
}
.kpi{
  width: 266px;
  flex: none;
  margin-right: 24px;
  padding-top: 32px;
  box-sizing: border-box;
  text-align: right;
}
.kpititle{
  font-size: 21.5px;
  line-height: 32px;
  font-weight: 600;
  color: #111;
  text-decoration: underline;
  text-decoration-thickness: 2px;
  text-underline-offset: 4px;
}
.kpivalue{
  margin-top: 46px;
  font-size: 41px;
  line-height: 50px;
  font-weight: 500;
  color: #333;
}
.filter{
  flex: none;
  padding-top: 26px;
  box-sizing: border-box;
}
.place{
  width: 275px;
}
.likely{
  width: 418px;
}
.subs{
  width: 403px;
}
.week{
  width: 187px;
}
.filtername{
  font-size: 24px;
  line-height: 32px;
  color: #333;
  white-space: nowrap;
}
.filtername.right{
  text-align: right;
}
.dropdown{
  display: flex;
  align-items: center;
  justify-content: space-between;
  margin: 8px 0 0 7px;
  height: 39px;
  box-sizing: border-box;
  border: 1.5px solid #c4c4c4;
  border-width: 2px 1.5px;
  font-size: 20px;
  color: #777;
  padding-left: 8px;
}
.place .dropdown{
  width: 246px;
}
.subs .dropdown{
  width: 361px;
}
.dropdown.active{
  border-color: #666;
}
.dropdown i{
  display: block;
  width: 36px;
  height: 100%;
  box-sizing: border-box;
  border-left: 1px solid #ddd;
  position: relative;
}
.dropdown i::after{
  content: "";
  position: absolute;
  left: 12px;
  top: 13px;
  border-left: 6px solid transparent;
  border-right: 6px solid transparent;
  border-top: 9px solid #333;
}
.rangevalues{
  display: flex;
  justify-content: space-between;
  width: 377px;
  margin: 12px 0 0 10px;
  font-size: 22px;
  line-height: 32px;
  color: #555;
}
.slider{
  display: flex;
  align-items: center;
  width: 384px;
  height: 22px;
  margin: 9px 0 0 9px;
}
.track{
  flex: 1;
  height: 8px;
  background-color: #b0b0b0;
}
.handle{
  width: 16px;
  height: 22px;
  box-sizing: border-box;
  border: 2px solid #666;
  background-color: #fff;
}
.handle.left{
  border-radius: 12px 0 0 12px;
}
.handle.right{
  border-radius: 0 12px 12px 0;
}

/* check lists */
.checklist{
  margin-top: 8px;
}
.check{
  display: flex;
  align-items: center;
  height: 38px;
  font-size: 24.5px;
  color: #666;
}
.box{
  width: 28px;
  height: 28px;
  flex: none;
  margin-right: 10px;
  box-sizing: border-box;
  border: 2px solid #ccc;
  border-radius: 2px;
}
.check.on .box{
  border-color: #666;
}
.box use{
  fill: none;
  stroke: #666;
  stroke-width: 3;
}

/* map */
.mapandside{
  display: flex;
}
.mapcol{
  width: 1354px;
  flex: none;
}
.mapwrap{
  position: relative;
  height: 1364px;
  box-shadow: 0 0 0 1px #e2e2e2;
}
.map{
  display: block;
  width: 1354px;
  height: 1364px;
}
.land{
  fill: #eeeeee;
}
g.land polygon{
  stroke: #eeeeee;
  stroke-width: 5;
  stroke-linejoin: round;
}
.park{
  fill: #dae5d7;
}
.water{
  fill: #c0d3d4;
  stroke: none;
}
.water polygon{
  stroke: #c0d3d4;
  stroke-width: 3;
  stroke-linejoin: round;
}
.water polyline{
  fill: none;
  stroke: #c0d3d4;
  stroke-linejoin: round;
  stroke-linecap: round;
}
.w3{
  stroke-width: 2.8;
}
.w5{
  stroke-width: 4.5;
}
.w8{
  stroke-width: 8;
}
.w18{
  stroke-width: 18;
}
.urban{
  fill: #e3e3e3;
}
.casing{
  fill: none;
  stroke: #fff;
  stroke-opacity: .55;
  stroke-width: 25;
  stroke-linejoin: round;
  stroke-linecap: round;
}
.border{
  fill: none;
  stroke: #8e8e8e;
  stroke-width: 2.5;
}
.marks{
  filter: drop-shadow(0 0 2px #fff) drop-shadow(0 0 2px #fff);
}
.marks circle{
  fill: #469851;
  fill-opacity: .96;
}
.marks circle.dk{
  fill: #2e7f47;
}
.marks circle.mk{
  fill: #3a8c4c;
}
.marks circle.lt{
  fill: #58a253;
}
.marks circle.ltr{
  fill: #80b257;
}
.marks circle.yl{
  fill: #f3d267;
}
.osm{
  position: absolute;
  left: 7px;
  top: 1334px;
  padding: 0 5px;
  font-size: 17px;
  line-height: 24px;
  color: #666;
  background-color: rgba(255,255,255,.75);
}
.legendtitle{
  height: 32px;
  margin-top: 13px;
  font-size: 24.8px;
  line-height: 32px;
  text-align: right;
  margin-right: -5px;
  color: #333;
}
.legend{
  display: flex;
  align-items: center;
  height: 33px;
  margin-top: 10px;
  padding-left: 4px;
  font-size: 25px;
  color: #555;
}
.legendbar{
  width: 1172px;
  height: 33px;
  margin: 0 9px 0 7px;
  box-sizing: border-box;
  border: 2px solid #a09c8f;
  border-width: 2px 1px;
  background: linear-gradient(to right, #f3d267, #aac15d 25%, #6cab58 50%, #3d9350 75%, #10683a);
}

/* right hand filters */
.side{
  width: 244px;
  flex: none;
  box-sizing: border-box;
  padding: 84px 0 0 32px;
}
.sidetitle{
  font-size: 24px;
  line-height: 32px;
  text-align: right;
  margin-right: 25px;
}
.diettitle{
  margin: 112px 30px 0 0;
  font-family: "Liberation Sans", sans-serif;
  font-size: 25px;
  line-height: 32px;
  text-align: right;
  color: #111;
  -webkit-text-stroke: .4px #111;
}
.dietlist{
  margin-top: 39px;
}
.diet{
  display: flex;
  align-items: center;
  height: 38px;
  font-family: "Liberation Sans", sans-serif;
  font-size: 24px;
  color: #111;
}
.diet i{
  display: block;
  width: 28px;
  height: 27px;
  margin-right: 13px;
  box-sizing: border-box;
  border: 2px solid #777;
  border-radius: 2px;
}
.diet.pork, .diet.poultry, .diet.seafood, .diet.dairy, .diet.egg, .diet.gluten{
  padding-left: 6px;
}
.pork{
  margin-top: 65px;
}
.poultry, .seafood{
  margin-top: 57px;
}
.dairy{
  margin-top: 61px;
}
.egg{
  margin-top: 58px;
}
.gluten{
  margin-top: 28px;
}

/* tab strip */
#tabs{
  display: flex;
  height: 60px;
  background-color: #eeeeee;
}
.tab{
  flex: none;
  display: flex;
  align-items: center;
  box-sizing: border-box;
  height: 60px;
  padding-left: 12px;
  font-size: 24px;
  color: #333;
  white-space: nowrap;
  overflow: hidden;
  border-right: 1px solid #dedede;
}
.t1, .t2, .t3, .t4{
  font-size: 25px;
}
.tabicon{
  width: 22px;
  height: 22px;
  flex: none;
  margin: 0 9px 0 5px;
}
.tabicon use{
  fill: none;
  stroke: #666;
  stroke-width: 2;
}
.current{
  background-color: #fff;
  font-weight: 700;
  color: #111;
}
.t1{ width: 355px; }
.t2{ width: 337px; }
.t3{ width: 400px; }
.t4{ width: 400px; }
.t5{ width: 248px; }
.t6{ width: 302px; }
.t7{ width: 215px; }
.t8{ width: 211px; }
.t9{ width: 172px; }
.tabtools{
  flex: 1;
  display: flex;
  align-items: center;
  padding: 2px 0 0 38px;
  box-sizing: border-box;
  background-color: #f0f0f0;
}
.tool{
  display: block;
  flex: none;
  margin-right: 22px;
}
.tool.arrow{
  margin-right: 34px;
}
.tool.show{
  margin-left: -9px;
}
.toolgrey{
  fill: #bfbfbf;
}
.tooldark{
  fill: #6b6b6b;
}
.toolline{
  fill: none;
  stroke: #6b6b6b;
  stroke-width: 3;
}

/* sheet preview */
.preview{
  position: absolute;
  left: 2552px;
  top: 1466px;
  width: 304px;
  height: 196px;
  box-sizing: border-box;
  padding: 8px;
  background-color: #000;
  border-radius: 8px;
  box-shadow: 0 0 60px rgba(0,0,0,.22);
}
.previewpage{
  display: block;
  width: 288px;
  height: 180px;
}
.pagewhite{
  fill: #fff;
}
.minilogo{
  font-family: Lato, sans-serif;
  font-size: 82px;
  font-weight: 300;
  fill: #222;
}
.minititle{
  font-size: 25.5px;
  fill: #8aba3c;
  font-weight: 700;
}
.minitext{
  font-size: 24px;
  fill: #555;
  font-weight: 600;
}
.minitext.big{
  font-size: 38px;
}
.minibox{
  fill: none;
  stroke: #bbb;
  stroke-width: 3;
}
.minitip{
  fill: #fff;
  stroke: #ccc;
  stroke-width: 4;
}
.minibar{
  fill: url(#legendgrad);
}
.minitabs{
  fill: #eee;
}
.minithumb{
  fill: #333;
}
```
